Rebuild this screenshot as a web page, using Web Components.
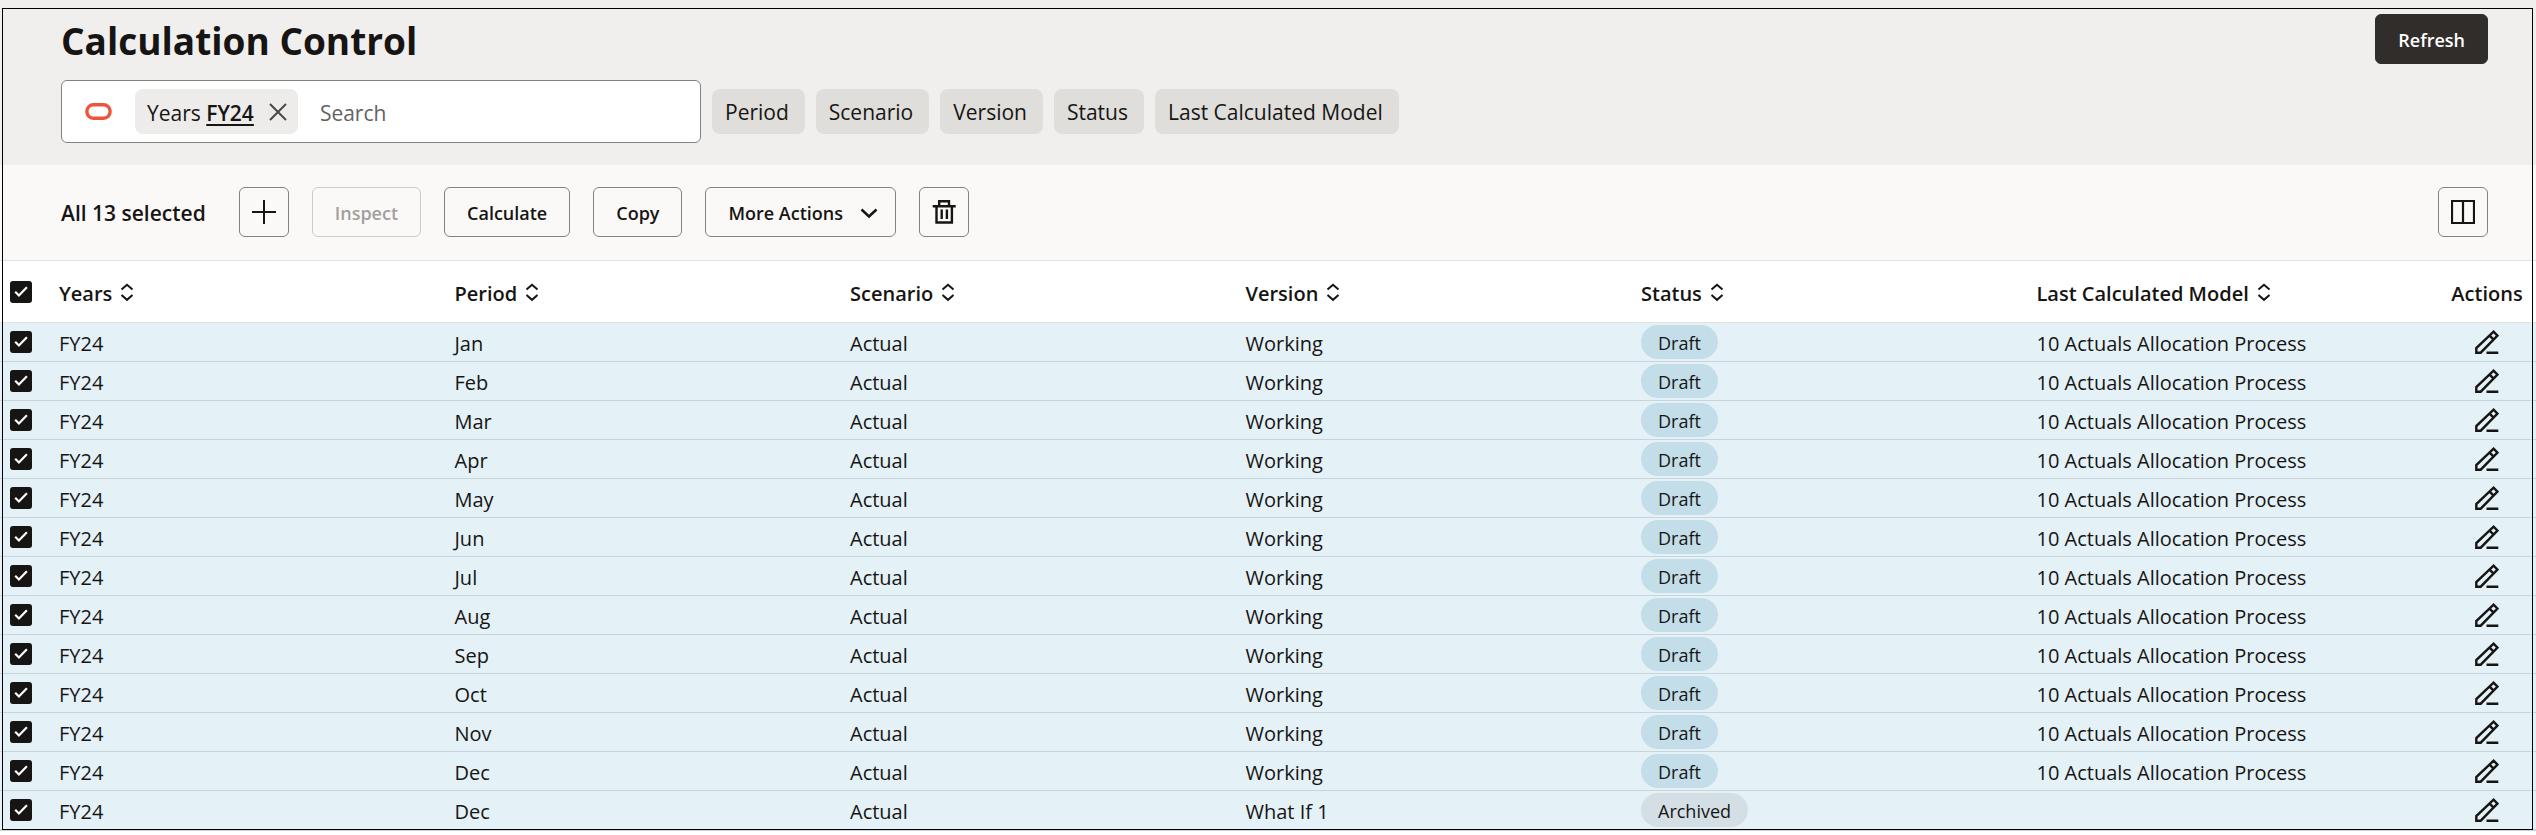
<!DOCTYPE html>
<html lang="en">
<head>
<meta charset="utf-8">
<title>Calculation Control</title>
<style>
    body {
        margin: 0;
        background: #fff;
        color: #161513;
        font-family: "Open Sans", "Noto Sans", sans-serif;
        font-size: 20px;
    }
</style>
</head>
<body>
<calculation-page></calculation-page>

<script>
const ICONS = {
    plus: '<path d="M12 0v24M0 12h24" stroke-width="2"/>',
    trash: '<path d="M0.7 6.2h23M7.2 6V1.3h9.800V6M4.500 6.500v16h15.400v-16M9.700 9.500v9.500M14.900 9.500v9.500" stroke-width="2.400"/>',
    columns: '<path d="M1 1h22v22H1zM12 1v22" stroke-width="2.200"/>',
    pencil: '<path d="M1.300 22.700v-4.600L18.600 1.700l3.900 3.900L5.700 22.700zM14.600 5.600l4 4M11.500 22.800h11.800" stroke-width="2.400"/>',
    chevron: '<path d="M4.500 8.500L12 15.500l7.500-7" stroke-width="2.500"/>',
    sort: '<path d="M6.500 9.500L12 4.800l5.500 4.700M6.500 15l5.500 4.800 5.500-4.800" stroke-width="2"/>',
    close: '<path d="M4 4l16 16M20 4L4 20" stroke-width="2"/>',
    oracle: '<rect x="1.700" y="6" width="20.600" height="12" rx="5.800" stroke-width="3"/>'
};

class UiIcon extends HTMLElement {
    connectedCallback() {
        const size = this.getAttribute('size') || 24;
        this.attachShadow({ mode: 'open' }).innerHTML = `
            <style>
                :host { display: inline-flex; flex: none; }
                svg { display: block; fill: none; stroke: currentColor; }
            </style>
            <svg width="${size}" height="${size}" viewBox="0 0 24 24" aria-hidden="true">${ICONS[this.getAttribute('name')]}</svg>
        `;
    }
}
customElements.define('ui-icon', UiIcon);

class UiButton extends HTMLElement {
    connectedCallback() {
        const label = this.getAttribute('label');
        this.attachShadow({ mode: 'open' }).innerHTML = `
            <style>
                :host { display: inline-flex; }
                button {
                    display: flex;
                    align-items: center;
                    justify-content: center;
                    gap: 14px;
                    box-sizing: border-box;
                    height: 50px;
                    min-width: 50px;
                    padding: 2px 22px 0;
                    border: 1px solid #84827f;
                    border-radius: 6px;
                    background: transparent;
                    color: inherit;
                    font: 600 18px/24px "Open Sans", "Noto Sans", sans-serif;
                    white-space: nowrap;
                }
                button:disabled { color: #a2a09e; border-color: #cecccb; }
                :host([icon]) button { padding: 0 12px; }
                :host([menu]) button { padding-right: 14px; }
                :host([solid]) button { background: #312d2a; border-color: #312d2a; color: #fff; }
            </style>
            <button type="button" ${label ? `aria-label="${label}"` : ''} ${this.hasAttribute('disabled') ? 'disabled' : ''}><slot></slot></button>
        `;
    }
}
customElements.define('ui-button', UiButton);

class FilterChip extends HTMLElement {
    connectedCallback() {
        this.attachShadow({ mode: 'open' }).innerHTML = `
            <style>
                :host { display: inline-flex; }
                button {
                    height: 45px;
                    padding: 0 16px 0 13px;
                    border: 0;
                    border-radius: 8px;
                    background: #dfdedb;
                    color: inherit;
                    font: 400 21px/28px "Open Sans", "Noto Sans", sans-serif;
                    white-space: nowrap;
                }
            </style>
            <button type="button"><slot></slot></button>
        `;
    }
}
customElements.define('filter-chip', FilterChip);

class FilterSearch extends HTMLElement {
    connectedCallback() {
        this.attachShadow({ mode: 'open' }).innerHTML = `
            <style>
                :host {
                    display: flex;
                    align-items: center;
                    box-sizing: border-box;
                    width: 640px;
                    height: 63px;
                    padding: 0 24px 0 23px;
                    border: 1px solid #84827f;
                    border-radius: 6px;
                    background: #fff;
                    font-size: 21px;
                }
                .logo { color: #f0533c; }
                .token {
                    display: flex;
                    align-items: center;
                    height: 45px;
                    margin: 0 22px 0 23px;
                    padding: 0 8px 0 12px;
                    border-radius: 8px;
                    background: #edecea;
                    white-space: nowrap;
                }
                .token span { padding-top: 2px; }
                .token a {
                    color: inherit;
                    font-weight: 600;
                    text-underline-offset: 3px;
                }
                .token button {
                    display: flex;
                    margin-left: 12px;
                    padding: 0;
                    border: 0;
                    background: none;
                    color: #4a4845;
                }
                input {
                    flex: 1;
                    min-width: 0;
                    padding: 2px 0 0;
                    border: 0;
                    outline: 0;
                    background: none;
                    color: inherit;
                    font: inherit;
                }
                input::placeholder { color: #65625f; opacity: 1; }
            </style>
            <ui-icon class="logo" name="oracle" size="27"></ui-icon>
            <div class="token">
                <span>Years <a href="#years">FY24</a></span>
                <button type="button" aria-label="Remove Years filter"><ui-icon name="close"></ui-icon></button>
            </div>
            <input type="text" placeholder="Search" aria-label="Search">
        `;
    }
}
customElements.define('filter-search', FilterSearch);

class StatusBadge extends HTMLElement {
    connectedCallback() {
        this.attachShadow({ mode: 'open' }).innerHTML = `
            <style>
                :host {
                    display: inline-block;
                    box-sizing: border-box;
                    height: 34px;
                    padding: 2px 17px 0;
                    border-radius: 17px;
                    background: #c3dde9;
                    font-size: 18px;
                    line-height: 32px;
                    vertical-align: middle;
                }
                :host([kind="Archived"]) { background: #d4dfe5; }
            </style>
            <slot></slot>
        `;
    }
}
customElements.define('status-badge', StatusBadge);

const MONTHS = ['Jan', 'Feb', 'Mar', 'Apr', 'May', 'Jun', 'Jul', 'Aug', 'Sep', 'Oct', 'Nov', 'Dec'];

class CalculationTable extends HTMLElement {
    constructor() {
        super();
        this.attachShadow({ mode: 'open' });
        this.columns = ['Years', 'Period', 'Scenario', 'Version', 'Status', 'Last Calculated Model'];
        this.rows = MONTHS.map(period => ({
            period, version: 'Working', status: 'Draft', model: '10 Actuals Allocation Process'
        }));
        this.rows.push({ period: 'Dec', version: 'What If 1', status: 'Archived', model: '' });
    }

    connectedCallback() {
        this.render();
    }

    render() {
        this.shadowRoot.innerHTML = `
            <style>
                :host { display: block; }
                table {
                    width: 100%;
                    table-layout: fixed;
                    border-collapse: separate;
                    border-spacing: 0;
                }
                th, td {
                    box-sizing: border-box;
                    padding: 0 0 0 13px;
                    text-align: left;
                    white-space: nowrap;
                    vertical-align: middle;
                }
                th {
                    height: 62px;
                    border-bottom: 1px solid #e3e1df;
                    font-weight: 600;
                }
                td {
                    height: 39px;
                    border-bottom: 1px solid #c8d4da;
                    background: #e4f1f7;
                    line-height: 28px;
                }
                .text { padding-top: 4px; }
                .select { width: 46px; padding-left: 10px; }
                .actions { width: 117px; padding: 0 3px 0 22px; text-align: center; }
                .label { display: inline-block; padding-top: 4px; }
                .sort {
                    display: flex;
                    align-items: center;
                    gap: 3px;
                    padding: 0;
                    border: 0;
                    background: none;
                    color: inherit;
                    font: inherit;
                }
                .edit {
                    display: flex;
                    margin: 0 auto;
                    padding: 0;
                    border: 0;
                    background: none;
                    color: inherit;
                }
                input {
                    display: block;
                    appearance: none;
                    width: 22px;
                    height: 22px;
                    margin: 0;
                    border-radius: 3px;
                    background: #161513 url('data:image/svg+xml,<svg xmlns="http://www.w3.org/2000/svg" viewBox="0 0 22 22"><path d="M5.200 10.800l3.700 3.700 8-8.200" fill="none" stroke="white" stroke-width="2.200"/></svg>') center / 22px no-repeat;
                }
            </style>
            <table>
                <thead>
                    <tr>
                        <th class="select"><input type="checkbox" checked aria-label="Select all rows"></th>
                        ${this.columns.map(name => `<th><button class="sort" type="button"><span class="label">${name}</span><ui-icon name="sort"></ui-icon></button></th>`).join('')}
                        <th class="actions"><span class="label">Actions</span></th>
                    </tr>
                </thead>
                <tbody>${this.rows.map((row, i) => this.renderRow(row, i)).join('')}</tbody>
            </table>
        `;
    }

    renderRow(row, index) {
        return `
            <tr>
                <td class="select"><input type="checkbox" checked aria-label="Select row ${index + 1}"></td>
                <td class="text">FY24</td>
                <td class="text">${row.period}</td>
                <td class="text">Actual</td>
                <td class="text">${row.version}</td>
                <td><status-badge kind="${row.status}">${row.status}</status-badge></td>
                <td class="text">${row.model}</td>
                <td class="actions"><button class="edit" type="button" aria-label="Edit row ${index + 1}"><ui-icon name="pencil"></ui-icon></button></td>
            </tr>
        `;
    }
}
customElements.define('calculation-table', CalculationTable);

class CalculationPage extends HTMLElement {
    connectedCallback() {
        this.attachShadow({ mode: 'open' }).innerHTML = `
            <style>
                :host {
                    display: block;
                    position: relative;
                    border-bottom: 1px solid #c8d4da;
                }
                /* thin outline laid over the content */
                .frame {
                    position: absolute;
                    inset: 8px 3px 0 2px;
                    border: 1px solid #000;
                    pointer-events: none;
                }
                header {
                    padding: 14px 48px 22px 61px;
                    background: #f0efed;
                }
                .title-row {
                    display: flex;
                    align-items: center;
                    justify-content: space-between;
                    margin-bottom: 16px;
                }
                h1 {
                    margin: 0;
                    padding-top: 4px;
                    font-size: 37px;
                    line-height: 46px;
                    font-weight: 700;
                }
                .filters {
                    display: flex;
                    align-items: center;
                    gap: 11px;
                }
                .toolbar {
                    display: flex;
                    align-items: center;
                    gap: 23px;
                    padding: 22px 48px 23px 61px;
                    border-bottom: 1px solid #e5e3e1;
                    background: #fbf9f8;
                }
                .count {
                    margin-right: 10px;
                    padding-top: 2px;
                    font-size: 21px;
                    font-weight: 600;
                }
                .end { margin-left: auto; }
            </style>
            <header>
                <div class="title-row">
                    <h1>Calculation Control</h1>
                    <ui-button solid>Refresh</ui-button>
                </div>
                <div class="filters">
                    <filter-search></filter-search>
                    <filter-chip>Period</filter-chip>
                    <filter-chip>Scenario</filter-chip>
                    <filter-chip>Version</filter-chip>
                    <filter-chip>Status</filter-chip>
                    <filter-chip>Last Calculated Model</filter-chip>
                </div>
            </header>
            <div class="toolbar">
                <span class="count">All 13 selected</span>
                <ui-button icon label="Add"><ui-icon name="plus"></ui-icon></ui-button>
                <ui-button disabled>Inspect</ui-button>
                <ui-button>Calculate</ui-button>
                <ui-button>Copy</ui-button>
                <ui-button menu>More Actions<ui-icon name="chevron"></ui-icon></ui-button>
                <ui-button icon label="Delete"><ui-icon name="trash"></ui-icon></ui-button>
                <ui-button class="end" icon label="Columns"><ui-icon name="columns"></ui-icon></ui-button>
            </div>
            <calculation-table></calculation-table>
            <div class="frame"></div>
        `;
    }
}
customElements.define('calculation-page', CalculationPage);
</script>
</body>
</html>
